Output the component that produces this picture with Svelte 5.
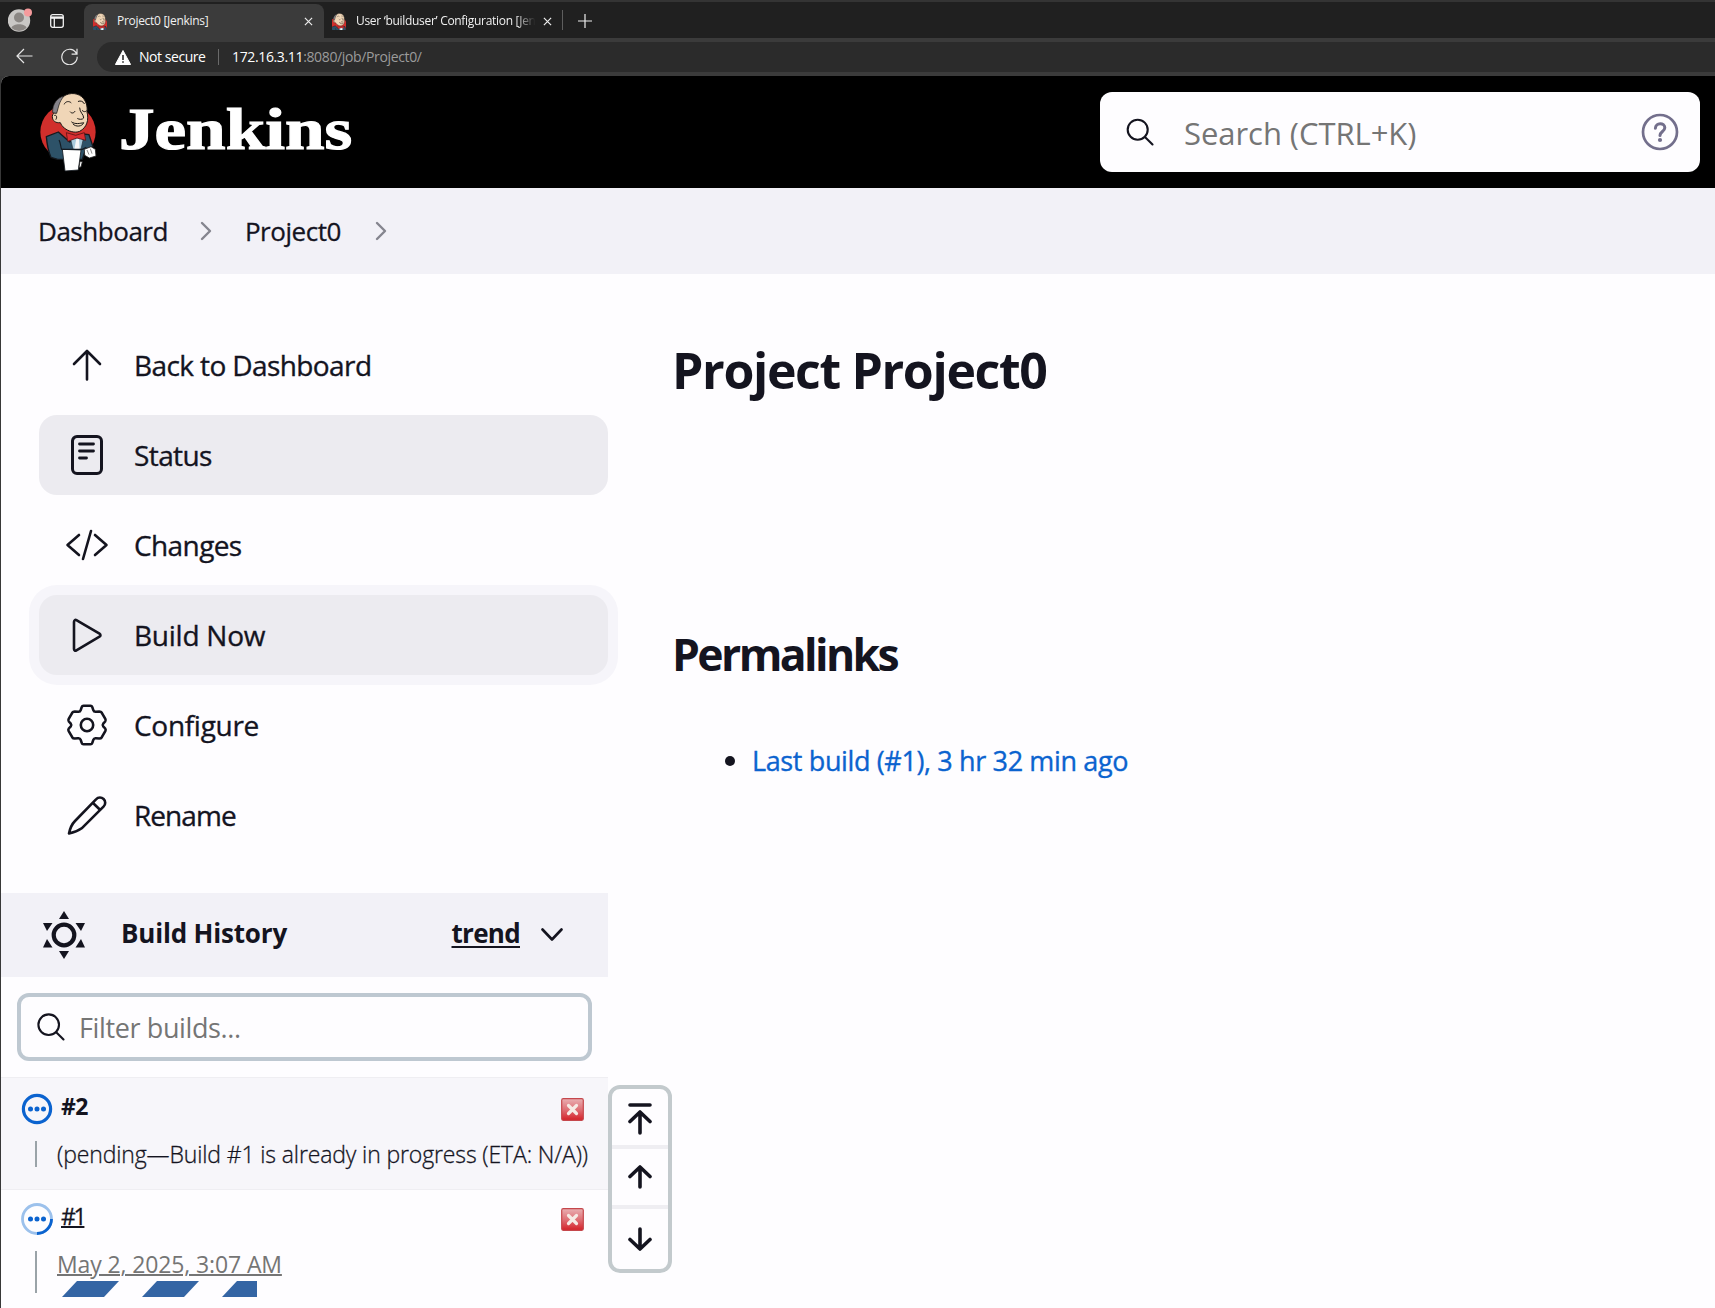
<script>
  const tasks = [
    { label: 'Back to Dashboard', icon: 'up', cls: 'wide' },
    { label: 'Status', icon: 'doc', cls: 'wide active' },
    { label: 'Changes', icon: 'code', cls: 'wide' },
    { label: 'Build Now', icon: 'play', cls: 'active focused' },
    { label: 'Configure', icon: 'gear', cls: 'mid' },
    { label: 'Rename', icon: 'pen', cls: 'tight' }
  ];
</script>

{#snippet butler()}
  <ellipse cx="93" cy="138" rx="83" ry="83" fill="#d12f2c" />
  <path d="M28 152l36-14 34 30 40-24 18 2 12 36-22 8-10 30H62l-20-6c-8-18-12-38-14-62z" fill="#2d5268" stroke="#141a20" stroke-width="4" stroke-linejoin="round" />
  <path d="M100 156l8 34h24l8-36-20-4z" fill="#a9cbdc" stroke="#26323c" stroke-width="2" />
  <path d="M118 158l-6 32h16l-2-32z" fill="#f7f7f7" />
  <path d="M74 36C88 20 118 18 134 32c14 12 18 30 16 46 6 24 0 46-22 58-14 6-34 0-46-10-6-4-9-10-12-16-14 2-24-6-24-18 0-8 5-13 12-11 2-16 6-34 16-49z" fill="#f0d6b7" stroke="#1b1714" stroke-width="3" />
  <path d="M47 80c-2-28 16-46 34-50-8 10-12 18-15 27l-7 25z" fill="#85838a" stroke="#1b1714" stroke-width="2" />
  <path d="M82 54c3-8 14-10 20-4M124 46c7-3 14 0 18 7M100 78c4 5 10 4 14-2M136 74c4 4 9 4 12 1M128 66c0 14 12 18 12 30-4 6-14 4-18 2M53 88c6-2 8 6 4 12M104 108c10 8 26 4 36 2-4 12-24 14-32 4" fill="none" stroke="#1b1714" stroke-width="3" stroke-linecap="round" />
  <path d="M88 140l28 8 26-8 4 23-26-7-28 10z" fill="#da2f32" stroke="#5c1514" stroke-width="2.500" stroke-linejoin="round" />
  <path d="M76 190l56 2-8 60-40 3z" fill="#fff" stroke="#141a20" stroke-width="2.500" />
  <path d="M142 190l20-8 13 8 2 20-20 6-14-8zM129 226l7 1-4 16-6 1z" fill="#fff" stroke="#222" stroke-width="2.500" />
  <path d="M150 192l6 14M160 188l5 15" stroke="#555" stroke-width="2" />
  <path d="M66 162c6 10 4 20 8 28l62 0 12-6" fill="none" stroke="#141a20" stroke-width="3.500" />
{/snippet}

{#snippet cancel()}
  <svg class="cancel" viewBox="0 0 23 23">
    <defs>
      <linearGradient id="cg" x1="0" y1="0" x2="0" y2="1">
        <stop offset="0" stop-color="#e9b0b3" />
        <stop offset="0.5" stop-color="#df7076" />
        <stop offset="1" stop-color="#d42027" />
      </linearGradient>
    </defs>
    <rect x="0.7" y="0.7" width="21.6" height="21.6" rx="1.5" fill="url(#cg)" stroke="#c5474c" stroke-width="1.2" />
    <path d="M7.5 7.5l8 8M15.5 7.5l-8 8" stroke="#f6ebe5" stroke-width="3.2" stroke-linecap="round" />
  </svg>
{/snippet}

<div class="window">
  <div class="tabs">
    <svg class="avatar" viewBox="0 0 24 24">
      <circle cx="11" cy="12.5" r="11.2" fill="#c9c7c5" />
      <circle cx="11" cy="9.5" r="5" fill="#8b8784" />
      <path d="M3.5 20c1-5 14-5 15 0a11 11 0 0 1-15 0z" fill="#8b8784" />
      <circle cx="20" cy="4.5" r="4" fill="#f59a9c" />
    </svg>
    <svg class="tabicon" viewBox="0 0 14 14" fill="none" stroke="#f2f2f2" stroke-width="1.3">
      <rect x="0.7" y="0.7" width="12.6" height="12.6" rx="2" />
      <path d="M1 3.6h12" stroke-width="2.4" />
      <path d="M4.3 4v9" />
    </svg>
    <div class="tab current">
      <svg class="fav" viewBox="40 18 120 160">{@render butler()}</svg>
      <span class="tabtext t1">Project0 [Jenkins]</span>
      <svg class="x" viewBox="0 0 10 10"><path d="M1 1l8 8M9 1l-8 8" stroke="#eee" stroke-width="1.3" /></svg>
    </div>
    <div class="tab other">
      <svg class="fav" viewBox="40 18 120 160">{@render butler()}</svg>
      <span class="tabtext t2">User ‘builduser’ Configuration [Jen</span>
      <svg class="x" viewBox="0 0 10 10"><path d="M1 1l8 8M9 1l-8 8" stroke="#eee" stroke-width="1.3" /></svg>
    </div>
    <div class="tabsep"></div>
    <svg class="plus" viewBox="0 0 14 14"><path d="M7 0v14M0 7h14" stroke="#eee" stroke-width="1.2" /></svg>
  </div>

  <div class="toolbar">
    <svg class="back" viewBox="0 0 17 16" fill="none" stroke="#e6e6e6" stroke-width="1.2"><path d="M16.5 8H1M8 1L1 8l7 7" /></svg>
    <svg class="reload" viewBox="0 0 17 17" fill="none" stroke="#e6e6e6" stroke-width="1.2"><path d="M15.6 6A7.7 7.7 0 1 0 16.2 8.8M16 .8v5.4h-5.4" /></svg>
    <div class="address">
      <svg class="warn" viewBox="0 0 16 15"><path d="M8 .5L15.6 14.5H.4z" fill="#fff" stroke="#fff" stroke-linejoin="round" /><path d="M8 5v5M8 11.2v1.6" stroke="#2b2b2b" stroke-width="1.6" /></svg>
      <span class="secure">Not secure</span>
      <div class="addrsep"></div>
      <span class="url"><b>172.16.3.11</b>:8080/job/Project0/</span>
    </div>
  </div>

  <div class="page">
    <header>
      <svg class="mascot" viewBox="0 0 210 264">{@render butler()}</svg>
      <span class="brand">Jenkins</span>
      <div class="search">
        <svg class="mag" viewBox="0 0 28 28" fill="none" stroke="#14141f" stroke-width="2.1" stroke-linecap="round"><circle cx="11.7" cy="11.7" r="10" /><path d="M19.2 19.2l7.3 7.3" /></svg>
        <span class="searchtext">Search (CTRL+K)</span>
        <svg class="help" viewBox="0 0 38 38" fill="none" stroke="#736f8c" stroke-width="2.7" stroke-linecap="round"><circle cx="19" cy="19" r="17" /><path d="M14.4 15.2c.2-6 9.4-6 9.4-.4 0 3.6-4.8 3.8-4.8 7.6" stroke-width="3" /><circle cx="19" cy="27" r="2.1" fill="#736f8c" stroke="none" /></svg>
      </div>
    </header>

    <nav class="crumbs">
      <span>Dashboard</span>
      <svg viewBox="0 0 12 20"><path d="M2 2l8 8-8 8" /></svg>
      <span>Project0</span>
      <svg class="last" viewBox="0 0 12 20"><path d="M2 2l8 8-8 8" /></svg>
    </nav>

    <div class="body">
      <aside>
        <div class="tasks">
          {#each tasks as t}
            <div class="task {t.cls}">
              <svg viewBox="0 0 44 44" fill="none" stroke="#14141f" stroke-width="2.6" stroke-linecap="round" stroke-linejoin="round">
                {#if t.icon === 'up'}
                  <path d="M22 36.500V8M9 21L22 8l13 13" />
                {:else if t.icon === 'doc'}
                  <rect x="7.500" y="3.500" width="29" height="37" rx="4.500" stroke-width="3" />
                  <path d="M14.500 11h14M14.500 18h14M14.500 25h7" stroke-width="2.800" />
                {:else if t.icon === 'code'}
                  <path d="M14 12L2.500 22 14 32M30 12l11.500 10L30 32M26 8l-8 28" />
                {:else if t.icon === 'play'}
                  <path d="M9 9v27c0 1.500 1.200 2 2.400 1.300L34.500 23.700c1.300-.8 1.300-2.200 0-3L11.400 7.200C10.200 6.500 9 7.300 9 9z" />
                {:else if t.icon === 'gear'}
                  <circle cx="22" cy="22" r="6.200" />
                  <path d="M18.500 2.700h7q1.300 0 1.800 1.500l1 3q.6 1.800 2.600 1.600l3.400-.3q1.700 0 2.500 1.300l3.500 6q.8 1.500-.1 2.700l-2 2.200q-1 1.300 0 2.600l2 2.200q.9 1.200.1 2.700l-3.500 6q-.8 1.300-2.500 1.300l-3.400-.3q-2-.2-2.600 1.600l-1 3q-.5 1.500-1.800 1.500h-7q-1.300 0-1.800-1.500l-1-3q-.6-1.800-2.600-1.600l-3.400.3q-1.700 0-2.500-1.300l-3.500-6q-.8-1.500.1-2.700l2-2.200q1-1.300 0-2.600l-2-2.200q-.9-1.200-.1-2.700l3.500-6q.8-1.300 2.500-1.300l3.400.3q2 .2 2.600-1.600l1-3q.5-1.500 1.800-1.500z" />
                {:else}
                  <path d="M4 40.500c1-5 2.500-9 6-12.500L31 6.300c2.400-2.600 5.500-2.300 7.600-.3s2.200 5.300-.1 7.700L16.700 35.300C13 38 9 39.500 4 40.500zM28.300 10.300l6.200 6" />
                {/if}
              </svg>
              <span>{t.label}</span>
            </div>
          {/each}
        </div>

        <div class="history">
          <svg class="sun" viewBox="0 0 42 48" fill="#14141f">
            <circle cx="21" cy="24" r="10.300" fill="none" stroke="#14141f" stroke-width="4.200" />
            <path d="M21 0l5 8H16zM21 48l5-8H16zM0 12l9.500 0-5.500 8zM42 12l-9.500 0 5.500 8zM0 36.500l9.500 0-5.500-8.500zM42 36.500l-9.500 0 5.500-8.500z" />
          </svg>
          <span class="htitle">Build History</span>
          <span class="trend">trend</span>
          <svg class="down" viewBox="0 0 22 14"><path d="M1.500 1.500L11 11.500l9.500-10" /></svg>
        </div>

        <div class="filter">
          <svg class="mag" viewBox="0 0 28 28" fill="none" stroke="#14141f" stroke-width="2.1" stroke-linecap="round"><circle cx="11.700" cy="11.700" r="10.300" /><path d="M19.200 19.200l7.300 7.300" /></svg>
          <span>Filter builds...</span>
        </div>

        <div class="build queued">
          <div class="line">
            <svg class="ball" viewBox="0 0 32 32"><circle cx="16" cy="16" r="13.600" fill="none" stroke="#0b63cf" stroke-width="3.200" /><path d="M9.500 16h.01M16 16h.01M22.500 16h.01" stroke="#0b63cf" stroke-width="5" stroke-linecap="round" /></svg>
            <span class="num bold">#2</span>
            {@render cancel()}
          </div>
          <div class="detail"><i></i><span class="pending">(pending—Build #1 is already in progress (ETA: N/A))</span></div>
        </div>

        <div class="build running">
          <div class="line">
            <svg class="ball" viewBox="0 0 32 32"><circle cx="16" cy="16" r="14.500" fill="none" stroke="#9cc1ec" stroke-width="2.800" /><path d="M30.500 16A14.500 14.500 0 0 1 16 30.500" fill="none" stroke="#0b63cf" stroke-width="2.800" /><path d="M9.500 16h.01M16 16h.01M22.500 16h.01" stroke="#0b63cf" stroke-width="5" stroke-linecap="round" /></svg>
            <span class="num link">#1</span>
            {@render cancel()}
          </div>
          <div class="detail tall">
            <i></i>
            <div class="stack">
              <span class="date">May 2, 2025, 3:07 AM</span>
              <svg class="bar" viewBox="0 0 200 16" fill="#3465a4"><path d="M5 16L20 0h42L47 16zM85 16L100 0h42L127 16zM165 16L180 0h20v16z" /></svg>
            </div>
          </div>
        </div>
      </aside>

      <main>
        <h1>Project Project0</h1>
        <h2>Permalinks</h2>
        <div class="perma"><em></em><span>Last build (#1), 3 hr 32 min ago</span></div>
      </main>
    </div>

    <div class="pager">
      <div><svg class="top" viewBox="0 0 24 34"><path d="M2 3h20M12 31V10M2 19.500L12 10l10 9.500" /></svg></div>
      <div><svg viewBox="0 0 24 24"><path d="M12 22V3M2 11.500L12 2l10 9.500" /></svg></div>
      <div><svg viewBox="0 0 24 24"><path d="M12 2v19M2 12.500L12 22l10-9.500" /></svg></div>
    </div>
  </div>
</div>

<style>
  :global(body) { margin: 0; background: #383838; }
  .window { width: 1715px; height: 1308px; overflow: hidden; font-family: 'Open Sans', 'Noto Sans', sans-serif; color: #14141f; background: #383838; }
  svg { flex: none; display: block; }
  span { white-space: nowrap; }

  .tabs { display: flex; align-items: center; height: 36px; border-top: 2px solid #343434; background: #202020; }
  .avatar { width: 24px; height: 24px; margin-left: 8px; }
  .tabicon { width: 14px; height: 14px; margin: 2px 0 0 18px; }
  .tab { display: flex; align-items: center; box-sizing: border-box; height: 34px; font-size: 12px; letter-spacing: -0.3px; color: #f0f0f0; }
  .tab.current { margin: 2px 0 0 20px; width: 240px; border-radius: 8px 8px 0 0; background: #3b3b3b; padding-left: 9px; }
  .tab.other { width: 238px; padding: 2px 0 0 8px; }
  .fav { width: 14px; height: 17px; }
  .tabtext { flex: none; margin: 0 0 2px 10px; }
  .t1 { width: 185px; }
  .t2 { width: 185px; -webkit-mask-image: linear-gradient(90deg, #000 86%, transparent 97%); mask-image: linear-gradient(90deg, #000 86%, transparent 97%); }
  .x { width: 9px; height: 9px; margin-left: 2px; margin-top: 1px; }
  .tabsep { width: 1px; height: 20px; background: #5e5e5e; }
  .plus { width: 14px; height: 14px; margin: 1px 0 0 15px; }

  .toolbar { display: flex; align-items: center; height: 38px; background: #3b3b3b; }
  .back { width: 17px; height: 16px; margin: 0 0 2px 16px; }
  .reload { width: 17px; height: 17px; margin: 0 0 2px 28px; }
  .address { display: flex; align-items: center; margin-left: 19px; height: 30px; flex: 1; border-radius: 15px 0 0 15px; background: #2b2b2b; font-size: 14px; color: #fff; }
  .address span { margin-bottom: 1px; }
  .warn { width: 16px; height: 15px; margin-left: 18px; }
  .secure { margin-left: 8px; width: 67px; letter-spacing: -0.45px; }
  .addrsep { width: 1px; height: 16px; background: #6a6a6a; margin-left: 12px; }
  .url { margin-left: 13px; color: #9b9b9b; letter-spacing: -0.36px; }
  .url b { font-weight: 400; color: #fff; }

  .page { position: relative; margin-left: 1px; height: 1232px; background: #fefdff; border-top-left-radius: 8px; overflow: hidden; }
  header { display: flex; align-items: center; height: 112px; background: #000; }
  .mascot { width: 70px; height: 88px; margin: 0 0 4px 36px; }
  .brand { font: bold 59px/60px 'Liberation Serif', serif; color: #fff; -webkit-text-stroke: 1.2px #fff; margin: 0 0 7px 12px; transform: scaleX(1.205); transform-origin: left; }
  .search { display: flex; align-items: center; margin-left: auto; margin-right: 15px; width: 600px; height: 80px; border-radius: 12px; background: #fefdff; box-sizing: border-box; padding-left: 26px; }
  .mag { width: 28px; height: 28px; }
  .searchtext { font-size: 31px; letter-spacing: -0.05px; color: #757575; margin: 1px 0 0 30px; }
  .help { width: 38px; height: 38px; margin-left: auto; margin-right: 21px; }

  .crumbs { display: flex; align-items: center; height: 86px; background: #f2f1f7; font-size: 26px; letter-spacing: -0.47px; padding-left: 37px; -webkit-text-stroke: 0.3px #14141f; }
  .crumbs svg { width: 12px; height: 20px; fill: none; stroke: #85858e; stroke-width: 2.4; stroke-linecap: round; stroke-linejoin: round; margin: 0 33px 0 32px; }
  .crumbs .last { margin-left: 34px; }

  .body { display: flex; }
  aside { width: 607px; flex: none; }
  .tasks { display: flex; flex-direction: column; gap: 10px; padding: 51px 0 0 38px; }
  .task { display: flex; align-items: center; height: 80px; border-radius: 18px; padding-left: 26px; font-size: 28px; letter-spacing: -0.25px; -webkit-text-stroke: 0.35px #14141f; }
  .task.wide { letter-spacing: -0.6px; }
  .task.mid { letter-spacing: -0.3px; }
  .task.tight { letter-spacing: -0.95px; }
  .task svg { width: 44px; height: 44px; margin: 0 25px 1px 0; }
  .task.active { background: #ecebf0; }
  .task.focused { box-shadow: 0 0 0 10px #f6f5fa; }

  .history { display: flex; align-items: center; height: 84px; margin-top: 38px; background: #f2f1f7; font-weight: 700; font-size: 26px; }
  .history span { margin-bottom: 4px; }
  .sun { width: 42px; height: 48px; margin-left: 42px; }
  .htitle { margin-left: 36px; letter-spacing: -0.18px; }
  .trend { margin-left: auto; letter-spacing: -0.7px; text-decoration: underline; text-decoration-thickness: 2px; text-underline-offset: 3px; }
  .down { width: 22px; height: 14px; margin: 0 45px 0 21px; fill: none; stroke: #14141f; stroke-width: 2.6; stroke-linecap: round; stroke-linejoin: round; }

  .filter { display: flex; align-items: center; box-sizing: border-box; width: 575px; height: 68px; margin: 16px 0 16px 16px; border: 4px solid #bec8d1; border-radius: 12px; padding-left: 16px; font-size: 27px; letter-spacing: -0.38px; color: #757575; }
  .filter .mag { margin-right: 14px; }

  .build { box-sizing: border-box; height: 112px; border-top: 1px solid #efeef2; padding-top: 15px; }
  .queued { background: #f7f6fa; }
  .running { padding-top: 13px; }
  .line { display: flex; align-items: center; height: 32px; padding: 0 24px 0 20px; font-size: 23px; }
  .ball { width: 32px; height: 32px; }
  .num { margin: 0 0 6px 8px; }
  .bold { font-weight: 700; letter-spacing: -0.5px; }
  .link { letter-spacing: -2.3px; text-decoration: underline; text-decoration-thickness: 2px; -webkit-text-stroke: 0.3px #14141f; }
  .cancel { width: 23px; height: 23px; margin-left: auto; }
  .detail { display: flex; height: 26px; margin-top: 16px; padding-left: 34px; align-items: center; }
  .detail i { width: 2px; height: 26px; background: #9aa3a8; margin-right: 20px; }
  .pending { font-size: 23px; font-weight: 300; letter-spacing: -0.13px; -webkit-text-stroke: 0.3px #14141f; }
  .detail.tall { height: 46px; align-items: flex-start; }
  .tall i { height: 42px; }
  .stack { display: flex; flex-direction: column; }
  .date { font-size: 23px; line-height: 30px; margin: -2px 0 2px; letter-spacing: -0.12px; color: #757575; text-decoration: underline; text-decoration-thickness: 2px; }
  .bar { width: 200px; height: 16px; }

  main { flex: 1; padding-left: 64px; }
  h1 { margin: 66px 0 0; font-size: 50px; line-height: 60px; font-weight: 700; letter-spacing: -1.35px; }
  h2 { margin: 227px 0 0; font-size: 44.500px; line-height: 54px; font-weight: 700; letter-spacing: -2.6px; }
  .perma { display: flex; align-items: center; height: 40px; margin-top: 59px; font-size: 27px; letter-spacing: -0.37px; color: #0b63cf; -webkit-text-stroke: 0.35px #0b63cf; }
  .perma em { width: 10px; height: 10px; border-radius: 50%; background: #14141f; margin: 1px 17px 0 53px; }

  .pager { position: absolute; left: 607px; top: 1009px; box-sizing: border-box; width: 64px; height: 188px; border: 4px solid #c3cacd; border-radius: 12px; background: #fefdff; display: flex; flex-direction: column; }
  .pager div { display: flex; align-items: center; justify-content: center; height: 56px; border-bottom: 4px solid #efeef2; }
  .pager div:last-child { height: 60px; border-bottom: 0; }
  .pager svg { width: 24px; height: 24px; fill: none; stroke: #14141f; stroke-width: 3.6; stroke-linecap: round; stroke-linejoin: round; }
  .pager .top { height: 34px; margin-top: 4px; }
</style>
